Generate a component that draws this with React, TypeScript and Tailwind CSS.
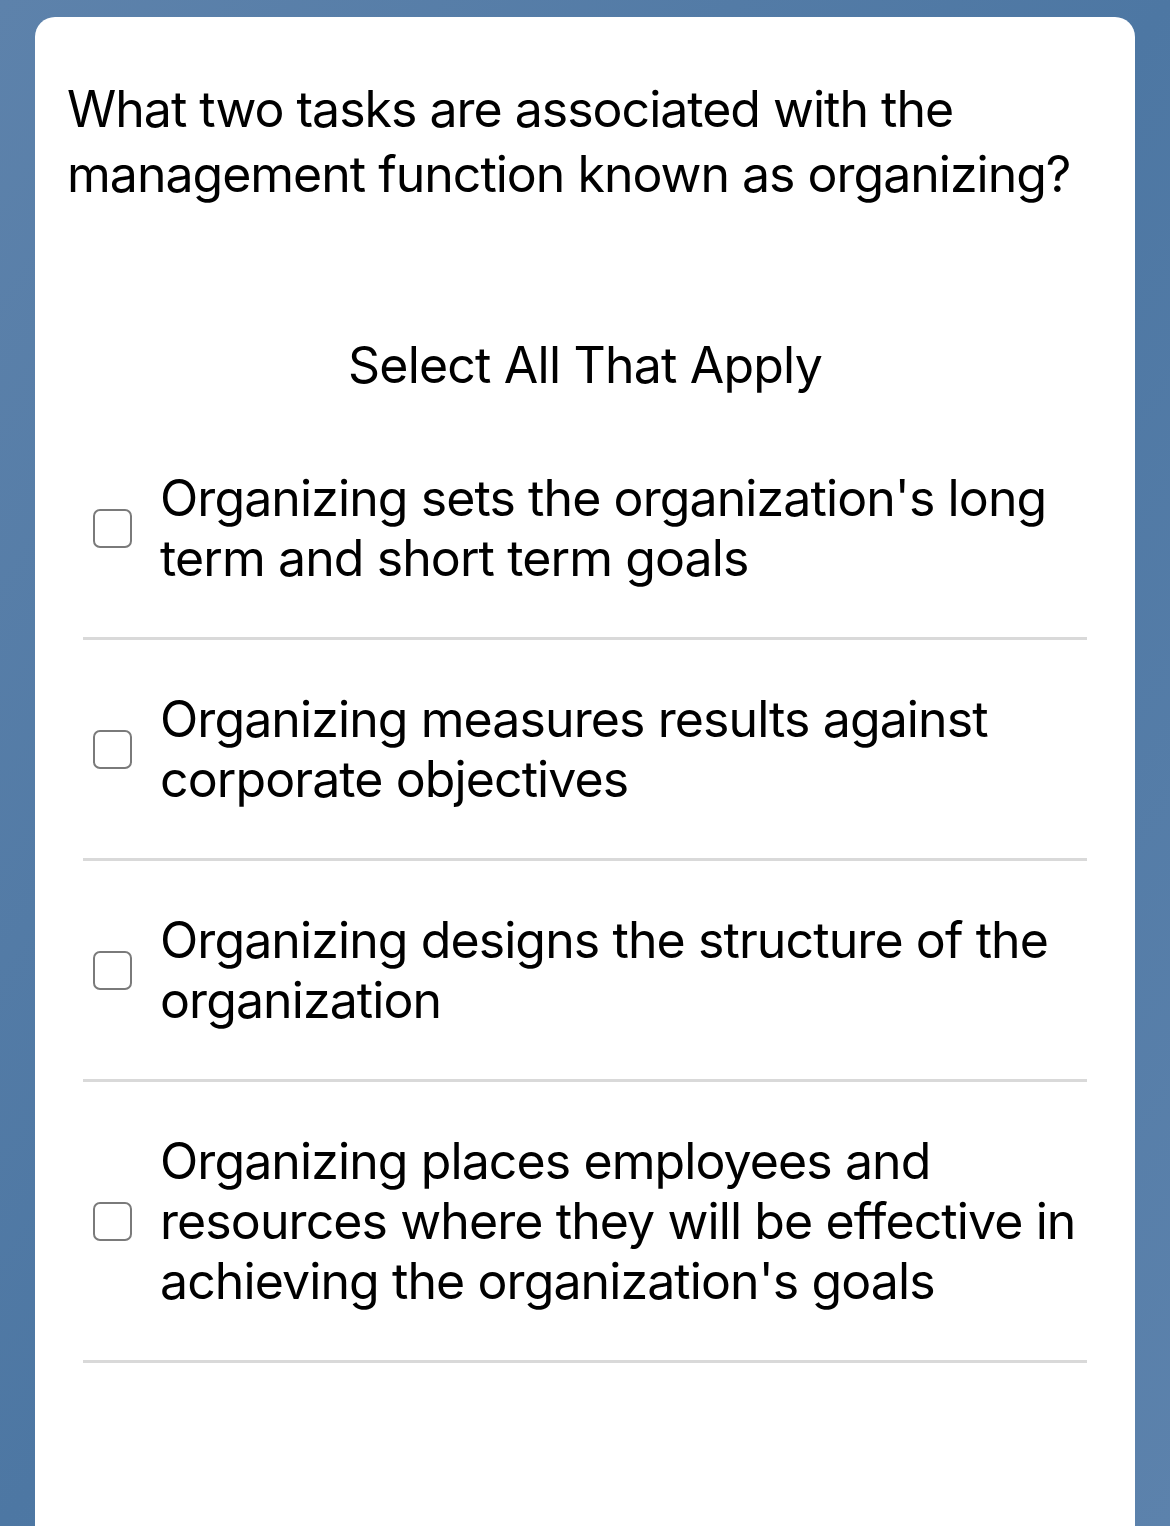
const options = [
  "Organizing sets the organization's long term and short term goals",
  "Organizing measures results against corporate objectives",
  "Organizing designs the structure of the organization",
  "Organizing places employees and resources where they will be effective in achieving the organization's goals",
];

function Checkbox() {
  return (
    <span className="block h-[39px] w-[39px] shrink-0 rounded-[7px] border-[2.5px] border-[#7a7a7a] bg-white" />
  );
}

export default function App() {
  return (
    <div
      className="min-h-[1526px] w-full bg-gradient-to-br from-[#5d82ab] via-[#4d77a3] to-[#5c82ac] pt-[17px] px-[35px] text-black"
      style={{ fontFamily: "Inter, 'Noto Sans', sans-serif" }}
    >
      <div className="min-h-[1509px] rounded-t-[20px] bg-white">
        <h1 className="px-[32px] pt-[60px] text-[50px] font-normal leading-[65px] tracking-[-1px]">
          What two tasks are associated with the management function known as organizing?
        </h1>

        <p className="mt-[128px] text-center text-[50px] leading-[60px] tracking-[-0.8px]">
          Select All That Apply
        </p>

        <ul className="mx-[48px] mt-[24px]">
          {options.map((opt, i) => (
            <li key={i} className="flex items-center gap-[28px] border-b-[3px] border-[#d9d9d9] pl-[10px] pr-[4px] pt-[49px] pb-[49px]">
              <Checkbox />
              <span className="text-[50px] leading-[60px] tracking-[-0.9px]">{opt}</span>
            </li>
          ))}
        </ul>
      </div>
    </div>
  );
}
